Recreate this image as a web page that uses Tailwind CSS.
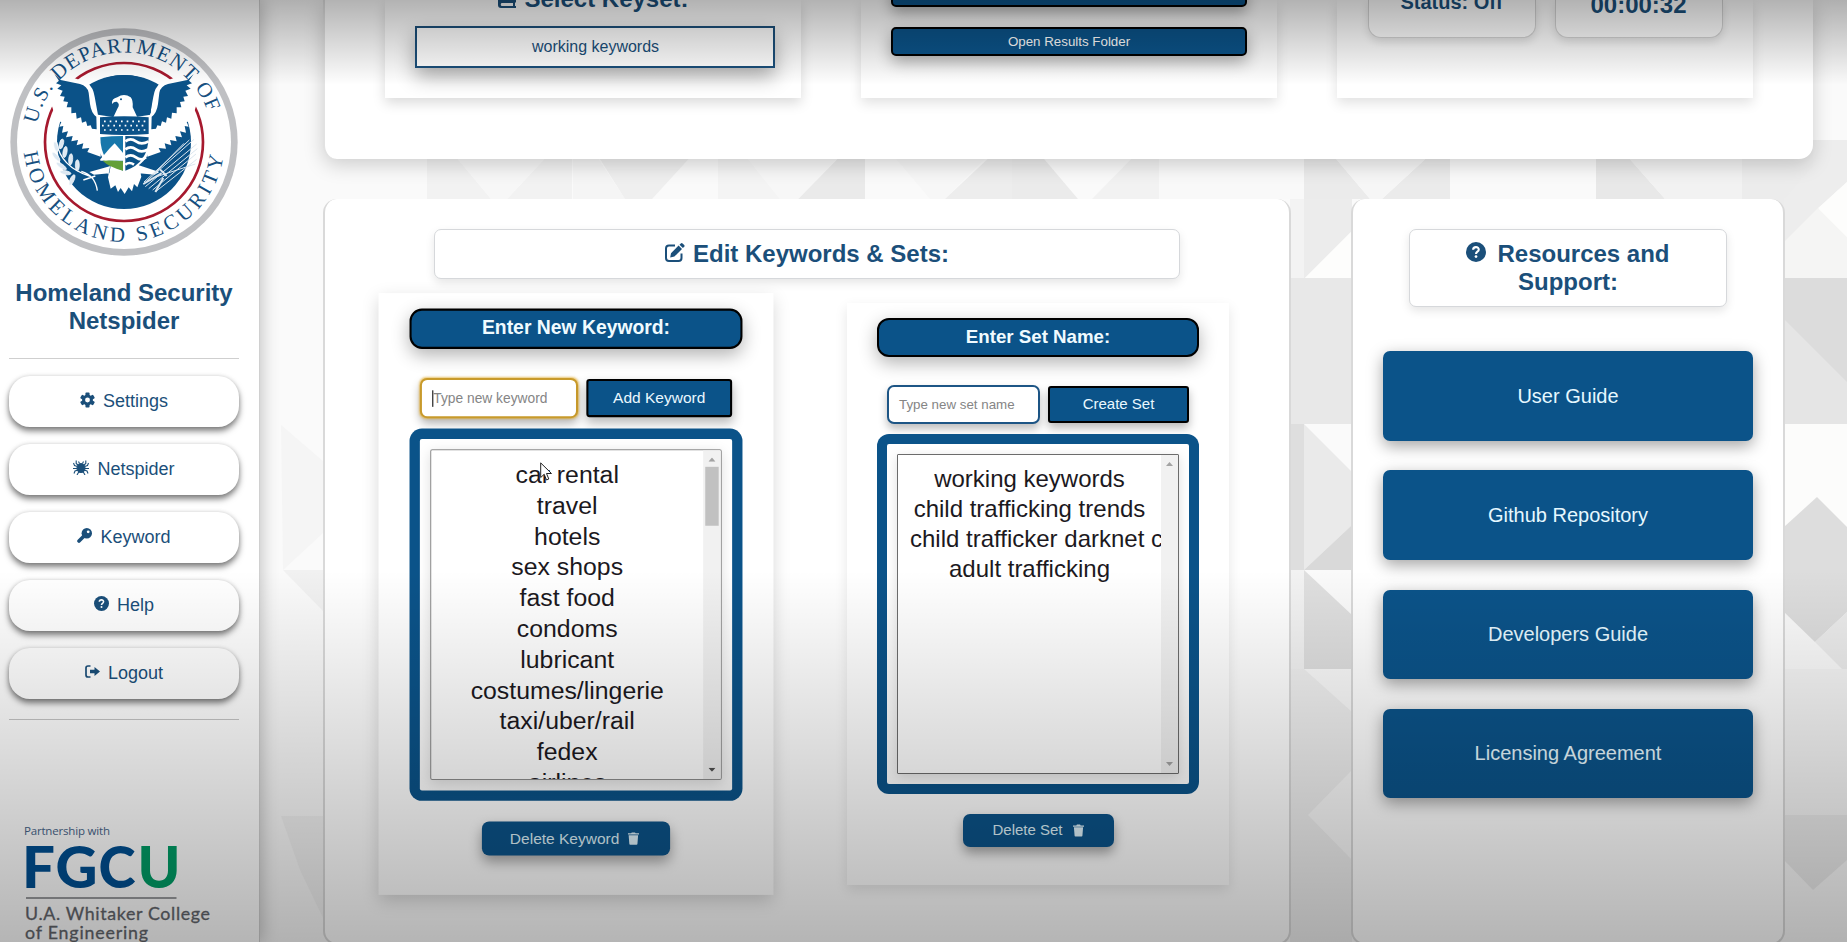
<!DOCTYPE html>
<html lang="en">
<head>
<meta charset="utf-8">
<title>Homeland Security Netspider</title>
<script src="https://cdn.jsdelivr.net/npm/@tailwindcss/browser@4"></script>
</head>
<body class="relative flex h-[942px] w-[1847px] overflow-hidden bg-[#fbfbfb] font-['Liberation_Sans',Arial,sans-serif] text-[#1b4f7a]">

<!-- shared icons -->
<svg class="hidden">
  <symbol id="trash" viewBox="0 0 12 13"><path fill="currentColor" d="M0 1h3.6L4.300 0h3.400l.7 1H12v1.300H0zM1 3h10l-.7 9a1 1 0 0 1-1 1H2.700a1 1 0 0 1-1-1z"/></symbol>
  <symbol id="help" viewBox="0 0 16 16"><circle cx="8" cy="8" r="8" fill="currentColor"/><path d="M5.700 6.200C5.800 3.300 10.300 3.500 10.200 6.200 10.100 7.900 8 7.700 8 9.500" fill="none" stroke="#fff" stroke-width="1.700"/><circle cx="8" cy="11.700" r="1.100" fill="#fff"/></symbol>
</svg>

<!-- geometric backdrop -->
<svg class="absolute inset-0" width="1847" height="942" viewBox="0 0 1847 942">
  <rect width="1847" height="942" fill="#fafafa"/>
  <g fill="#f2f2f2">
    <path d="M427 140V199H491L442 140zM562 140L507 199H572V140z"/>
    <path d="M573 140V199H625L586 140z" fill="#f5f5f5"/>
    <path d="M588 140L625 199H652L706 140z" fill="#efefef"/>
    <path d="M718 140V199H780L733 140z" fill="#f4f4f4"/>
    <path d="M856 140L798 199H865V140z" fill="#eaeaea"/>
    <path d="M442 140L491 199H507L562 140zM733 140L780 199H798L856 140zM880 140L930 199H945L1004 140z" fill="#f7f7f7"/>
    <path d="M865 140V199H930L880 140z" fill="#fafafa"/>
    <path d="M1008 140L945 199H1012V140z" fill="#ededed"/>
    <path d="M1012 140V199H1078L1028 140z" fill="#ebebeb"/>
    <path d="M1150 140L1092 199H1159V140z" fill="#f2f2f2"/>
    <path d="M1159 140H1304V199H1159z" fill="#f9f9f9"/>
    <path d="M1304 140V199H1370L1320 140zM1446 140L1382 199H1450V140z" fill="#ebebeb"/>
    <path d="M1320 140L1370 199H1382L1446 140z" fill="#f6f6f6"/>
    <path d="M1596 140V199H1665L1613 140z" fill="#e8e8e8"/>
    <path d="M1613 140L1665 199H1742V140z" fill="#f2f2f2"/>
    <path d="M1742 140H1847V180L1784 245H1742z" fill="#ececec"/>
  </g>
  <!-- column between the cards -->
  <path d="M1290 199H1304V278H1290z" fill="#f3f3f3"/>
  <path d="M1304 199H1352V231L1305 278H1304z" fill="#ececec"/>
  <path d="M1352 231V278H1305z" fill="#fdfdfc"/>
  <path d="M1290 278H1352V424H1290z" fill="#e8e8e8"/>
  <path d="M1290 424H1304V570H1290z" fill="#dedede"/>
  <path d="M1304 424L1352 472V525L1304 570z" fill="#eaeaea"/>
  <path d="M1304 570L1352 525V570z" fill="#d9d9d9"/>
  <path d="M1290 570H1304V669H1290z" fill="#f2f2f2"/>
  <path d="M1304 570L1352 615V669H1304z" fill="#dfdfdf"/>
  <path d="M1290 669H1304L1352 712V770L1308 815 1352 860V942H1290z" fill="#f0f0f0"/>
  <!-- right edge -->
  <path d="M1813 140H1847V182L1818 208 1784 242V199L1813 165z" fill="#ededed"/>
  <path d="M1818 208L1847 237V278H1784V242z" fill="#f5f5f4"/>
  <path d="M1847 182V237L1818 208z" fill="#fdfdfc"/>
  <path d="M1784 278H1847V424H1784z" fill="#e5e5e5"/>
  <path d="M1784 278H1847V382L1784 319z" fill="#dcdcdc"/>
  <path d="M1784 424H1847V527H1784z" fill="#fcfcfb"/>
  <path d="M1784 527L1817 497 1847 527V612L1815 642 1784 612z" fill="#dddddd"/>
  <path d="M1847 612V669H1842L1815 642z" fill="#ececec"/>
  <path d="M1784 669H1847V815H1784z" fill="#f5f5f5"/>
  <path d="M1784 815H1847V860L1813 890 1784 860z" fill="#ebebeb"/>
  <!-- left strip -->
  <path d="M281 425L324 462V532L283 570z" fill="#f5f5f5"/>
  <path d="M283 570H324V612z" fill="#f1f1f1"/>
  <path d="M281 816H324V920L300 870z" fill="#f2f2f2"/>
</svg>

<aside class="relative flex w-[260px] shrink-0 flex-col border-r border-[#d0d0d0] bg-white shadow-[2px_0_16px_rgba(0,0,0,0.22)]">
  <svg class="mt-[28px] ml-[10px] shrink-0" width="228" height="228" viewBox="30 84 684 684">
    <circle cx="372" cy="426" r="341" fill="#bfc0c3"/>
    <circle cx="372" cy="426" r="321" fill="#fff"/>
    <circle cx="372" cy="426" r="237" fill="none" stroke="#a6192e" stroke-width="8"/>
    <circle cx="372" cy="426" r="201" fill="#0b5288"/>
    <defs>
      <path id="arcTop" d="M111 372A266 266 0 0 1 633 372"/>
      <path id="arcBottom" d="M72 458A302 302 0 0 0 672 458"/>
      <g id="wing">
        <path fill="#fff" d="M150 208L262 248Q280 262 284 290L294 345 302 348V470L262 456 268 444 246 446 250 430 230 436 234 420 214 424 218 408 198 412 204 394 186 398 190 378 178 380 184 366 170 362 150 300z"/>
        <path fill="#0b5288" d="M163 222L182 240 240 252Q262 258 266 278L270 312Q274 340 289 350L290 388 276 386 272 376 262 378 258 364 246 368 243 352 230 356 228 338 214 340 214 322 200 322 204 306 190 304 194 290 180 288 188 272 172 266 184 256 168 250 177 242z"/>
      </g>
    </defs>
    <use href="#wing"/>
    <use href="#wing" transform="translate(744 0) scale(-1 1)"/>
    <g fill="#164f80" font-family="Liberation Serif, serif" font-size="63">
      <text letter-spacing="3.400"><textPath href="#arcTop">U.S. DEPARTMENT OF</textPath></text>
      <text letter-spacing="11.500"><textPath href="#arcBottom">HOMELAND SECURITY</textPath></text>
    </g>
    <path fill="#0b5288" d="M272 254Q372 196 472 254Q458 262 457 285L452 340H296L287 285Q284 262 272 254z"/>
    <!-- head -->
    <path fill="#fff" d="M336 312Q334 296 352 292Q372 278 392 292Q400 302 398 322L412 352H340L352 326Q362 312 350 305Q342 304 336 312z"/>
    <circle cx="363" cy="298" r="3" fill="#0b5288"/>
    <!-- tail and legs -->
    <path fill="#fff" d="M332 490H416L424 530 412 562 402 552 396 574 386 562 374 582 362 564 354 576 346 556 332 566 324 532zM332 498L268 516 282 524 328 520zM412 494L478 516 464 524 418 520z"/>
    <!-- shield -->
    <path fill="#fff" d="M294 344L372 356 452 344V430Q450 490 372 520Q296 490 294 430z"/>
    <path fill="#0b5288" d="M300 352Q372 346 446 352V402Q372 408 300 402z"/>
    <g fill="none" stroke="#fff" stroke-width="5" stroke-dasharray="5 12"><path d="M312 364H438"/><path d="M306 377H440"/><path d="M312 390H438"/></g>
    <path fill="#1777ab" d="M301 412Q336 408 369 408V512Q301 490 301 412z"/>
    <path fill="#fff" d="M301 478L328 446 344 430 369 458V482H301z"/>
    <path fill="#63a038" d="M308 482Q340 480 369 484V512Q325 500 308 482z"/>
    <path fill="#0b5288" d="M376 408Q410 408 446 412Q444 490 376 512z"/>
    <g fill="none" stroke="#fff" stroke-width="8"><path d="M376 424Q392 412 408 424T446 424"/><path d="M376 448Q392 436 408 448T444 448"/><path d="M376 472Q392 460 408 472T438 472"/><path d="M376 494Q388 484 402 494"/></g>
    <!-- olive branch -->
    <g fill="none" stroke="#fff" stroke-width="4"><path d="M170 426Q180 500 272 530M244 514Q286 526 292 572M250 540L286 528"/></g>
    <g fill="#dce8f2" stroke="#fff" stroke-width="2">
      <ellipse cx="168" cy="440" rx="6" ry="15" transform="rotate(-15 168 440)"/><ellipse cx="184" cy="432" rx="6" ry="15" transform="rotate(15 184 432)"/>
      <ellipse cx="168" cy="470" rx="6" ry="17" transform="rotate(-40 168 470)"/><ellipse cx="195" cy="456" rx="6" ry="17" transform="rotate(10 195 456)"/>
      <ellipse cx="184" cy="498" rx="6" ry="18" transform="rotate(-55 184 498)"/><ellipse cx="212" cy="478" rx="6" ry="17" transform="rotate(5 212 478)"/>
      <ellipse cx="196" cy="518" rx="6" ry="17" transform="rotate(-80 196 518)"/><ellipse cx="232" cy="496" rx="6" ry="17"/>
      <ellipse cx="216" cy="540" rx="6" ry="17" transform="rotate(25 216 540)"/>
    </g>
    <!-- arrows -->
    <g fill="none" stroke="#dbe6ef" stroke-width="3"><path d="M430 552L582 418M436 560L590 432M446 566L592 446M458 570L588 462M468 574L590 478M432 546L568 420M464 520L552 430M470 530L586 492"/><path stroke-width="6" d="M480 508L500 528M430 552L484 520M466 576L490 534"/></g>
  </svg>

  <h1 class="mt-[23px] w-[248px] text-center text-2xl leading-[28px] font-bold">Homeland Security<br>Netspider</h1>
  <div class="mt-[23px] ml-[9px] w-[230px] border-t border-[#cfcfcf]"></div>

  <nav class="mt-[17px] ml-[9px] flex w-[230px] flex-col gap-[17px] text-lg">
    <a class="flex h-[51px] items-center justify-center gap-[8px] rounded-[21px] bg-white pb-[2px] shadow-[0_4px_6px_rgba(0,0,0,0.5),0_0_4px_rgba(0,0,0,0.12)]">
      <svg class="-mt-[2px]" width="15" height="16" viewBox="-8 -8 16 16" fill="currentColor"><path fill-rule="evenodd" d="M0-5.800A5.800 5.800 0 1 0 0 5.800 5.800 5.800 0 1 0 0-5.800zM0-2.600A2.600 2.600 0 1 1 0 2.600 2.600 2.600 0 1 1 0-2.600z"/><g id="teeth"><rect x="-2.200" y="-7.900" width="4.400" height="3.500" rx="0.900"/><rect x="-2.200" y="4.400" width="4.400" height="3.500" rx="0.900"/></g><use href="#teeth" transform="rotate(60)"/><use href="#teeth" transform="rotate(120)"/></svg>
      <span>Settings</span></a>
    <a class="flex h-[51px] items-center justify-center gap-[8px] rounded-[21px] bg-white pb-[2px] shadow-[0_4px_6px_rgba(0,0,0,0.5),0_0_4px_rgba(0,0,0,0.12)]">
      <svg class="-mt-[2px]" width="16" height="15" viewBox="0 0 16 15" fill="none" stroke="currentColor" stroke-width="1.100"><ellipse cx="8" cy="8" rx="4" ry="4.500" fill="currentColor"/><path d="M5 5L3.200 3.500V.5M11 5L12.800 3.500V.5M4.500 6.500L1.500 5.500.5 3M11.500 6.500L14.500 5.500 15.500 3M4.500 8.500H0M11.500 8.500H16M5 10L2 11 1 13.500M11 10L14 11 15 13.500M6 11.500L4 15M10 11.500L12 15M6.500 3.500L5.500 1.500M9.500 3.500L10.500 1.500"/></svg>
      <span>Netspider</span></a>
    <a class="flex h-[51px] items-center justify-center gap-[8px] rounded-[21px] bg-white pb-[2px] shadow-[0_4px_6px_rgba(0,0,0,0.5),0_0_4px_rgba(0,0,0,0.12)]">
      <svg class="-mt-[2px]" width="15" height="15" viewBox="0 0 15 15"><circle cx="9.800" cy="5.200" r="5.200" fill="currentColor"/><path d="M2 13L7 8" stroke="currentColor" stroke-width="3.600" stroke-linecap="round"/><circle cx="11.200" cy="3.800" r="1.400" fill="#fff"/></svg>
      <span>Keyword</span></a>
    <a class="flex h-[51px] items-center justify-center gap-[8px] rounded-[21px] bg-white pb-[2px] shadow-[0_4px_6px_rgba(0,0,0,0.5),0_0_4px_rgba(0,0,0,0.12)]">
      <svg class="-mt-[2px]" width="15" height="15"><use href="#help"/></svg>
      <span>Help</span></a>
    <a class="flex h-[51px] items-center justify-center gap-[8px] rounded-[21px] bg-white pb-[2px] shadow-[0_4px_6px_rgba(0,0,0,0.5),0_0_4px_rgba(0,0,0,0.12)]">
      <svg class="-mt-[2px]" width="15" height="13" viewBox="0 0 15 13"><path d="M5.500 1H3Q1 1 1 3V10Q1 12 3 12H5.500" fill="none" stroke="currentColor" stroke-width="1.700"/><path d="M5 4.700H9.500V2L15 6.500 9.500 11V8.300H5z" fill="currentColor"/></svg>
      <span>Logout</span></a>
  </nav>
  <div class="mt-[20px] ml-[9px] w-[230px] border-t border-[#c6c6c6]"></div>

  <svg class="mt-[100px] ml-[20px] shrink-0" width="200" height="122" viewBox="20 820 200 122">
    <text x="24" y="835" font-family="Open Sans, sans-serif" font-size="11.500" textLength="86" fill="#48658a">Partnership with</text>
    <g font-family="Lato, sans-serif" font-weight="900" font-size="57.500" fill="#004f92">
      <text x="22" y="888" textLength="33" lengthAdjust="spacingAndGlyphs">F</text>
      <text x="55.500" y="888" textLength="42" lengthAdjust="spacingAndGlyphs">G</text>
      <text x="98.500" y="888" textLength="37" lengthAdjust="spacingAndGlyphs">C</text>
      <text x="137.500" y="888" textLength="43" lengthAdjust="spacingAndGlyphs" fill="#009d66">U</text>
    </g>
    <path d="M26 898H176.500" stroke="#9a9c9f" stroke-width="2"/>
    <g font-family="Lato, sans-serif" font-weight="400" font-size="17.800" fill="#62656b" stroke="#62656b" stroke-width="0.300">
      <text x="25" y="919.500" textLength="185">U.A. Whitaker College</text>
      <text x="25" y="939" textLength="123">of Engineering</text>
    </g>
  </svg>
</aside>

<main class="relative ml-[63px] flex w-[1490px] flex-col">
  <!-- controls card, scrolled partly out of view -->
  <section class="flex h-[159px] shrink-0 gap-[60px] rounded-b-[14px] border-l-2 border-[#e2e2e2] bg-white pl-[60px] shadow-[0_6px_20px_rgba(0,0,0,0.18)]">
    <div class="flex h-[98px] w-[416px] flex-col items-center bg-white pl-[3px] shadow-[0_5px_12px_rgba(0,0,0,0.15)]">
      <h2 class="-mt-[15px] flex h-[28px] items-center gap-[8px] pr-[2px] text-2xl leading-[28px] font-bold">
        <svg class="-mt-[3px]" width="18" height="21" viewBox="0 0 18 21"><path fill="currentColor" d="M3 0H18V15L17 16V19H18V21H3Q0 21 0 18V3Q0 0 3 0zM3.500 16Q2 17.500 3.500 19H15V16z"/></svg>Select Keyset:</h2>
      <div class="mt-[13px] flex h-[42px] w-[360px] shrink-0 items-center justify-center border-2 border-[#1b4f7a] bg-white pb-[1px] pl-[2px] text-base shadow-[0_9px_20px_rgba(0,0,0,0.32)]"><span>working keywords</span></div>
    </div>
    <div class="flex h-[98px] w-[416px] flex-col items-center bg-white text-[13.333px] text-white shadow-[0_5px_12px_rgba(0,0,0,0.12)]">
      <div class="-mt-[22px] h-[29px] w-[356px] shrink-0 rounded-[5px] border-2 border-black bg-[#0b5389] shadow-[0_6px_14px_rgba(0,0,0,0.3)]"></div>
      <div class="mt-[20px] flex h-[29px] w-[356px] shrink-0 items-center justify-center rounded-[5px] border-2 border-black bg-[#0b5389] shadow-[0_6px_16px_rgba(0,0,0,0.32)]"><span>Open Results Folder</span></div>
    </div>
    <div class="flex h-[98px] w-[416px] justify-center gap-[19px] bg-white font-bold shadow-[0_5px_12px_rgba(0,0,0,0.12)]">
      <div class="flex h-[38px] w-[168px] justify-center rounded-b-[13px] border border-t-0 border-[#d4d4d4] bg-white text-xl leading-[24px] shadow-[0_4px_9px_rgba(0,0,0,0.12)]"><span class="-mt-[10px]">Status: Off</span></div>
      <div class="flex h-[38px] w-[168px] justify-center rounded-b-[13px] border border-t-0 border-[#d4d4d4] bg-white text-2xl leading-[28px] shadow-[0_4px_9px_rgba(0,0,0,0.12)]"><span class="-mt-[9px]">00:00:32</span></div>
    </div>
  </section>

  <div class="mt-[40px] flex gap-[60px]">
    <!-- keywords and sets -->
    <section class="flex h-[746px] w-[968px] shrink-0 flex-col items-center rounded-[14px] border-2 border-t-0 border-[#d9d9d9] bg-white pt-[30px]">
      <h2 class="flex h-[50px] w-[746px] shrink-0 items-center justify-center gap-[8px] rounded-[7px] border border-[#d6d8db] bg-white pb-[1px] text-2xl leading-[28px] font-bold shadow-[0_4px_10px_rgba(0,0,0,0.1)]">
        <svg class="-mt-[3px]" width="20" height="19" viewBox="0 0 20 19"><path d="M10 2.500H4Q1 2.500 1 5.500V15Q1 18 4 18H13.500Q16.500 18 16.500 15V10.500" fill="none" stroke="currentColor" stroke-width="2"/><path fill="currentColor" d="M6 10.200L13.600 2.600 17 6 9.400 13.600 5.200 14.400zM14.500 1.700L15.800.4Q16.700-.4 17.600.4L19.200 2Q20 2.900 19.200 3.800L17.900 5.100z"/></svg>
        <span>Edit Keywords &amp; Sets:</span></h2>

      <div class="mt-[24px] flex gap-[80px]">
        <!-- keyword panel, enlarged while hovered -->
        <div class="flex h-[582px] w-[382px] scale-[1.034] flex-col items-center bg-white pt-[15px] shadow-[0_6px_16px_rgba(0,0,0,0.17)]">
          <h3 class="flex h-[39px] w-[322px] shrink-0 items-center justify-center rounded-[12px] border-2 border-black bg-[#0b5389] text-[18.720px] font-bold text-[#f0fbff] shadow-[0_6px_18px_rgba(0,0,0,0.3)]">Enter New Keyword:</h3>
          <div class="mt-[28px] flex h-[39px] w-[302px] items-center gap-[8px]">
            <div class="flex h-[39px] w-[153px] items-center rounded-[7px] border-2 border-[#c89a2b] bg-white pl-[10px] shadow-[0_0_2px_rgba(230,170,30,0.6),0_5px_9px_rgba(0,0,0,0.3)]"><div class="h-[16px] w-px bg-black"></div><span class="text-[13.333px] text-[#858585]">Type new keyword</span></div>
            <div class="flex h-[37px] w-[141px] items-center justify-center rounded-[3px] border-2 border-black bg-[#0b5389] text-[15px] text-[#eaf8ff] shadow-[0_5px_10px_rgba(0,0,0,0.28)]"><span>Add Keyword</span></div>
          </div>
          <div class="mt-[10px] h-[360px] w-[322px] shrink-0 rounded-[12px] bg-[#0b5389] p-[10px]">
            <div class="h-[340px] rounded-[2px] bg-white p-[10px]">
              <div class="flex h-[320px] w-[282px] overflow-hidden rounded-[2px] border border-[#8d8d8d] bg-white shadow-[0_3px_12px_rgba(0,0,0,0.13)]">
                <ul class="min-w-0 flex-1 overflow-hidden px-[11px] pt-[9px] text-center text-2xl leading-[29.800px] whitespace-nowrap text-[#1c191e]">
                  <li>car rental</li><li>travel</li><li>hotels</li><li>sex shops</li><li>fast food</li><li>condoms</li><li>lubricant</li><li>costumes/lingerie</li><li>taxi/uber/rail</li><li>fedex</li><li>airlines</li>
                </ul>
                <div class="flex w-[17px] flex-col items-center justify-between bg-[#f1f1f1] pt-[7px] pb-[7px]">
                  <svg width="7" height="4" viewBox="0 0 7 4"><path d="M0 4L3.500 0 7 4z" fill="#a3a3a3"/></svg>
                  <div class="mt-[5px] mb-auto h-[57px] w-[13px] bg-[#c1c1c1]"></div>
                  <svg width="7" height="4" viewBox="0 0 7 4"><path d="M0 0L3.500 4 7 0z" fill="#505050"/></svg>
                </div>
              </div>
            </div>
          </div>
          <div class="mt-[20px] flex h-[33px] w-[182px] shrink-0 items-center justify-center gap-[8px] rounded-[7px] bg-[#0b5389] pr-[3px] text-[15px] text-[#dff2fa] shadow-[0_6px_12px_rgba(0,0,0,0.35)]"><span class="pt-px">Delete Keyword</span><svg width="11" height="13"><use href="#trash"/></svg></div>
        </div>

        <!-- set panel -->
        <div class="flex h-[582px] w-[382px] flex-col items-center bg-white pt-[15px] shadow-[0_5px_12px_rgba(0,0,0,0.1)]">
          <h3 class="flex h-[39px] w-[322px] shrink-0 items-center justify-center rounded-[12px] border-2 border-black bg-[#0b5389] pb-[1px] text-[18.720px] font-bold text-[#f0fbff] shadow-[0_6px_18px_rgba(0,0,0,0.3)]">Enter Set Name:</h3>
          <div class="mt-[28px] flex h-[39px] w-[302px] items-center gap-[8px]">
            <div class="flex h-[39px] w-[153px] items-center rounded-[7px] border-2 border-[#1d5585] bg-white pl-[10px] shadow-[0_5px_9px_rgba(0,0,0,0.26)]"><span class="text-[13.333px] text-[#858585]">Type new set name</span></div>
            <div class="flex h-[37px] w-[141px] items-center justify-center rounded-[3px] border-2 border-black bg-[#0b5389] text-[15px] text-[#eaf8ff] shadow-[0_5px_10px_rgba(0,0,0,0.28)]"><span>Create Set</span></div>
          </div>
          <div class="mt-[10px] h-[360px] w-[322px] shrink-0 rounded-[12px] bg-[#0b5389] p-[10px]">
            <div class="h-[340px] rounded-[2px] bg-white p-[10px]">
              <div class="flex h-[320px] w-[282px] overflow-hidden rounded-[1px] border border-[#6c6c6c] bg-white shadow-[0_3px_12px_rgba(0,0,0,0.13)]">
                <ul class="min-w-0 flex-1 overflow-hidden px-[12px] pt-[9px] text-center text-2xl leading-[30px] whitespace-nowrap text-[#1c191e]">
                  <li>working keywords</li><li>child trafficking trends</li><li>child trafficker darknet c</li><li>adult trafficking</li>
                </ul>
                <div class="flex w-[17px] flex-col items-center justify-between bg-[#f1f1f1] py-[7px]">
                  <svg width="7" height="4" viewBox="0 0 7 4"><path d="M0 4L3.500 0 7 4z" fill="#a3a3a3"/></svg>
                  <svg width="7" height="4" viewBox="0 0 7 4"><path d="M0 0L3.500 4 7 0z" fill="#a3a3a3"/></svg>
                </div>
              </div>
            </div>
          </div>
          <div class="mt-[20px] flex h-[33px] w-[151px] shrink-0 items-center justify-center gap-[10px] rounded-[7px] bg-[#0b5389] text-[15px] text-[#dff2fa] shadow-[0_6px_12px_rgba(0,0,0,0.35)]"><span>Delete Set</span><svg width="11" height="13"><use href="#trash"/></svg></div>
        </div>
      </div>
    </section>

    <!-- resources -->
    <section class="flex h-[746px] w-[434px] shrink-0 flex-col items-center rounded-[14px] border-2 border-t-0 border-[#d9d9d9] bg-white pt-[30px]">
      <h2 class="h-[78px] w-[318px] shrink-0 rounded-[7px] border border-[#d6d8db] bg-white pt-[10px] text-center text-2xl leading-[28px] font-bold shadow-[0_4px_10px_rgba(0,0,0,0.1)]"><svg class="mr-[11px] inline-block align-[0px]" width="20" height="20"><use href="#help"/></svg>Resources and<br>Support:</h2>
      <div class="mt-[44px] flex w-[370px] flex-col gap-[29.700px] text-xl text-[#e6f8ff]">
        <a class="flex h-[89.600px] items-center justify-center rounded-[7px] bg-[#0b5389] shadow-[0_5px_16px_rgba(0,0,0,0.36)]"><span>User Guide</span></a>
        <a class="flex h-[89.600px] items-center justify-center rounded-[7px] bg-[#0b5389] shadow-[0_5px_16px_rgba(0,0,0,0.36)]"><span>Github Repository</span></a>
        <a class="flex h-[89.600px] items-center justify-center rounded-[7px] bg-[#0b5389] shadow-[0_5px_16px_rgba(0,0,0,0.36)]"><span>Developers Guide</span></a>
        <a class="flex h-[89.600px] items-center justify-center rounded-[7px] bg-[#0b5389] pb-[1px] shadow-[0_5px_16px_rgba(0,0,0,0.36)]"><span>Licensing Agreement</span></a>
      </div>
    </section>
  </div>
</main>

<!-- mouse pointer -->
<svg class="absolute top-[462px] left-[540px]" width="13" height="20" viewBox="0 0 13 20"><path d="M.7.900V15.500L4.200 12.300 6.500 18 8.800 17 6.500 11.500H11.500z" fill="#fff" stroke="#222" stroke-width="1"/></svg>

<!-- dimming at the top and bottom edges -->
<div class="pointer-events-none absolute inset-x-0 top-0 h-[85px] bg-linear-to-b from-black/30 to-transparent"></div>
<div class="pointer-events-none absolute inset-x-0 bottom-0 h-[372px] bg-linear-to-t from-black/29 to-transparent"></div>
</body>
</html>
